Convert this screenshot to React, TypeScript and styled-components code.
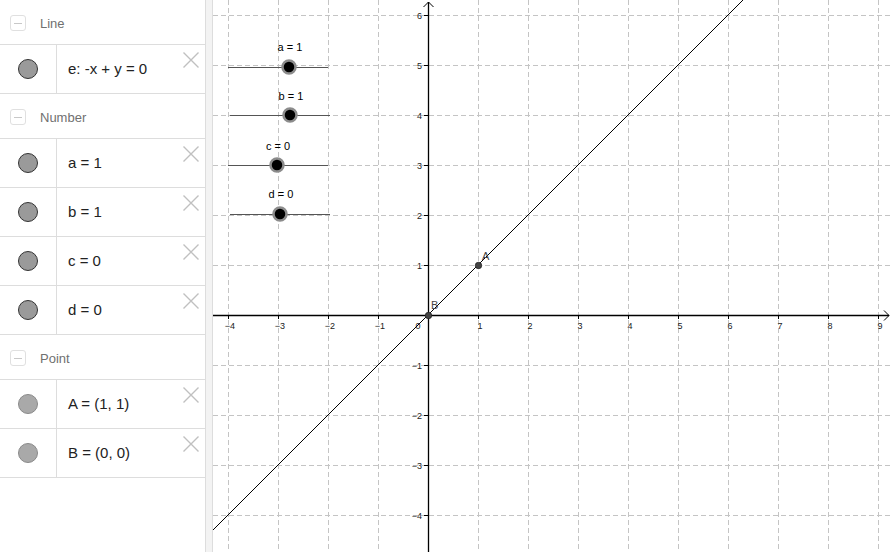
import React from "react";
import styled, { createGlobalStyle } from "styled-components";

/* ─── Global ─── */

const GlobalStyle = createGlobalStyle`
  html, body {
    margin: 0;
    padding: 0;
    background: #fff;
    overflow: hidden;
  }
  body {
    font-family: "Liberation Sans", Arial, sans-serif;
  }
`;

/* ─── Layout ─── */

const Shell = styled.div`
  display: flex;
  width: 891px;
  height: 552px;
  background: #fff;
`;

const AlgebraPanel = styled.div`
  width: 205px;
  flex-shrink: 0;
  display: flex;
  flex-direction: column;
  border-right: 1px solid #ddd;
  background: #fff;
`;

const Splitter = styled.div`
  width: 6px;
  flex-shrink: 0;
  background: #f3f3f3;
  border-right: 1px solid #ddd;
`;

const GraphicsView = styled.div`
  flex: 1;
  position: relative;
  overflow: hidden;
  svg {
    display: block;
  }
`;

/* ─── Algebra groups ─── */

const GroupHeader = styled.div`
  height: 44px;
  display: flex;
  align-items: center;
  gap: 14px;
  padding-left: 10px;
  border-bottom: 1px solid #ddd;
`;

const CollapseIcon = styled.div`
  width: 14px;
  height: 14px;
  border: 1px solid #e0e0e0;
  border-radius: 3px;
  margin-top: 2px;
  display: flex;
  align-items: center;
  justify-content: center;
  &::after {
    content: "";
    width: 8px;
    height: 1px;
    background: #c8c8c8;
  }
`;

const GroupTitle = styled.span`
  font-size: 13px;
  color: #707070;
  margin-top: 2px;
`;

const ItemRow = styled.div`
  height: 48px;
  display: flex;
  border-bottom: 1px solid #ddd;
`;

const MarkerCell = styled.div`
  width: 56px;
  flex-shrink: 0;
  display: flex;
  align-items: center;
  justify-content: center;
  border-right: 1px solid #ddd;
`;

const Marker = styled.div<{ $kind: "object" | "point" }>`
  width: 18px;
  height: 18px;
  border-radius: 50%;
  background: ${(p) => (p.$kind === "point" ? "#a9a9a9" : "#9a9a9a")};
  border: ${(p) => (p.$kind === "point" ? "1px solid #8a8a8a" : "1.5px solid #333")};
`;

const ItemText = styled.div`
  flex: 1;
  display: flex;
  align-items: center;
  padding-left: 11px;
  padding-bottom: 2px;
  font-size: 15px;
  color: #222;
  white-space: pre;
`;

const DeleteButton = styled.div`
  width: 16px;
  height: 16px;
  margin: 7px 6px 0 0;
  svg {
    display: block;
  }
`;

/* ─── Data ─── */

type Item = { text: string; kind: "object" | "point" };

const groups: { title: string; items: Item[] }[] = [
  { title: "Line", items: [{ text: "e: -x + y = 0", kind: "object" }] },
  {
    title: "Number",
    items: [
      { text: "a = 1", kind: "object" },
      { text: "b = 1", kind: "object" },
      { text: "c = 0", kind: "object" },
      { text: "d = 0", kind: "object" },
    ],
  },
  {
    title: "Point",
    items: [
      { text: "A = (1, 1)", kind: "point" },
      { text: "B = (0, 0)", kind: "point" },
    ],
  },
];

const sliders = [
  { label: "a = 1", x1: 228, y: 67, px: 289, ty: 51 },
  { label: "b = 1", x1: 230, y: 115, px: 290, ty: 100 },
  { label: "c = 0", x1: 228, y: 165, px: 277, ty: 150 },
  { label: "d = 0", x1: 230, y: 214, px: 280, ty: 198 },
];

/* ─── Graphics ─── */

const OX = 428;
const OY = 315;
const U = 50;

function Graph() {
  const xs: number[] = [];
  for (let k = -4; k <= 9; k++) xs.push(k);
  const ys: number[] = [];
  for (let k = -4; k <= 6; k++) ys.push(k);
  const minus = (n: number) => (n < 0 ? "\u2212" + Math.abs(n) : String(n));

  return (
    <svg width={678} height={552} viewBox="213 0 678 552">
      {/* grid */}
      <g stroke="#c4c4c4" strokeWidth={1} strokeDasharray="5 3">
        {xs.map((k) => (
          k !== 0 && <line key={"gx" + k} x1={OX + k * U + 0.5} y1={0} x2={OX + k * U + 0.5} y2={552} />
        ))}
        {[-5, ...ys].map((k) => (
          k !== 0 && <line key={"gy" + k} x1={213} y1={OY - k * U + 0.5} x2={891} y2={OY - k * U + 0.5} />
        ))}
      </g>

      {/* axes */}
      <g stroke="#000" strokeWidth={1.3} fill="none">
        <line x1={213} y1={OY + 0.5} x2={889} y2={OY + 0.5} />
        <line x1={OX + 0.5} y1={2} x2={OX + 0.5} y2={552} />
        <polyline points={`884,310.5 889,315.5 884,320.5`} strokeWidth={1} />
        <polyline points={`423.5,7 428.5,2 433.5,7`} strokeWidth={1} />
        {xs.map((k) => (
          k !== 0 && <line key={"tx" + k} x1={OX + k * U + 0.5} y1={OY} x2={OX + k * U + 0.5} y2={OY + 4} strokeWidth={1} />
        ))}
        {ys.map((k) => (
          k !== 0 && <line key={"ty" + k} x1={OX - 4} y1={OY - k * U + 0.5} x2={OX} y2={OY - k * U + 0.5} strokeWidth={1} />
        ))}
      </g>

      {/* tick labels */}
      <g fontFamily="Liberation Sans, Arial, sans-serif" fontSize={9} fill="#222">
        {xs.map((k) => (
          k !== 0 && (
            <text key={"lx" + k} x={OX + k * U + 2} y={OY + 14} textAnchor="middle">{minus(k)}</text>
          )
        ))}
        <text x={OX - 10} y={OY + 14} textAnchor="middle">0</text>
        {ys.map((k) => (
          k !== 0 && (
            <text key={"ly" + k} x={OX - 6} y={OY - k * U + 4} textAnchor="end">{minus(k)}</text>
          )
        ))}
      </g>

      {/* line e: y = x */}
      <line x1={213} y1={530} x2={743} y2={0} stroke="#000" strokeWidth={1} />

      {/* points */}
      <g fontFamily="Liberation Sans, Arial, sans-serif" fontSize={11} fill="#444">
        <circle cx={OX + U + 0.5} cy={OY - U + 0.5} r={3.2} fill="#444" stroke="#222" strokeWidth={0.8} />
        <text x={OX + U + 4} y={OY - U - 5}>A</text>
        <circle cx={OX + 0.5} cy={OY + 0.5} r={3.2} fill="#444" stroke="#222" strokeWidth={0.8} />
        <text x={OX + 3} y={OY - 6}>B</text>
      </g>

      {/* sliders */}
      <g fontFamily="Liberation Sans, Arial, sans-serif" fontSize={11} fill="#000">
        {sliders.map((s) => (
          <g key={s.label}>
            <line x1={s.x1} y1={s.y + 0.5} x2={s.x1 + 100} y2={s.y + 0.5} stroke="#555" strokeWidth={1} />
            <circle cx={s.px} cy={s.y} r={6.5} fill="#000" stroke="#8c8c8c" strokeWidth={2.5} />
            <text x={s.px + 1} y={s.ty} textAnchor="middle">{s.label}</text>
          </g>
        ))}
      </g>
    </svg>
  );
}

function DeleteIcon() {
  return (
    <svg width={16} height={16} viewBox="0 0 16 16">
      <path d="M0.5 0.5 L15.5 15.5 M15.5 0.5 L0.5 15.5" stroke="#c0c0c0" strokeWidth={1.4} fill="none" />
    </svg>
  );
}

/* ─── App ─── */

export default function App() {
  return (
    <>
      <GlobalStyle />
      <Shell>
        <AlgebraPanel>
          {groups.map((g) => (
            <React.Fragment key={g.title}>
              <GroupHeader>
                <CollapseIcon />
                <GroupTitle>{g.title}</GroupTitle>
              </GroupHeader>
              {g.items.map((it) => (
                <ItemRow key={it.text}>
                  <MarkerCell>
                    <Marker $kind={it.kind} />
                  </MarkerCell>
                  <ItemText>{it.text}</ItemText>
                  <DeleteButton>
                    <DeleteIcon />
                  </DeleteButton>
                </ItemRow>
              ))}
            </React.Fragment>
          ))}
        </AlgebraPanel>
        <Splitter />
        <GraphicsView>
          <Graph />
        </GraphicsView>
      </Shell>
    </>
  );
}
